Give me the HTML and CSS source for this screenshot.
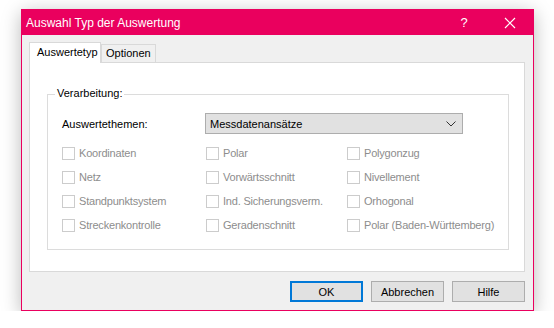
FILE: index.html
```html
<!DOCTYPE html>
<html lang="de">
<head>
    <meta charset="UTF-8">
    <title>Auswahl Typ der Auswertung</title>
    <link rel="stylesheet" href="styles.css">
</head>
<body>
    <div class="window">
        <div class="titlebar">
            <div class="title">Auswahl Typ der Auswertung</div>
            <div class="title-btn help">?</div>
            <div class="title-btn close">
                <svg width="12" height="12" viewBox="0 0 12 12"><path d="M1 1L11 11M11 1L1 11" stroke="#fff" stroke-width="1.2"/></svg>
            </div>
        </div>

        <div class="client">
            <div class="tab-bar">
                <div class="tab active">Auswertetyp</div>
                <div class="tab">Optionen</div>
            </div>

            <div class="tab-panel">
                <div class="group">
                    <span class="group-title">Verarbeitung:</span>

                    <div class="theme-row">
                        <span class="theme-label">Auswertethemen:</span>
                        <div class="select">
                            <span>Messdatenansätze</span>
                            <svg width="10" height="6" viewBox="0 0 10 6"><path d="M0.5 0.5L5 5L9.5 0.5" fill="none" stroke="#333" stroke-width="1"/></svg>
                        </div>
                    </div>

                    <div class="checks">
                        <label class="check"><span class="box"></span>Koordinaten</label>
                        <label class="check"><span class="box"></span>Polar</label>
                        <label class="check"><span class="box"></span>Polygonzug</label>
                        <label class="check"><span class="box"></span>Netz</label>
                        <label class="check"><span class="box"></span>Vorwärtsschnitt</label>
                        <label class="check"><span class="box"></span>Nivellement</label>
                        <label class="check"><span class="box"></span>Standpunktsystem</label>
                        <label class="check"><span class="box"></span>Ind. Sicherungsverm.</label>
                        <label class="check"><span class="box"></span>Orhogonal</label>
                        <label class="check"><span class="box"></span>Streckenkontrolle</label>
                        <label class="check"><span class="box"></span>Geradenschnitt</label>
                        <label class="check"><span class="box"></span>Polar (Baden-Württemberg)</label>
                    </div>
                </div>
            </div>

            <div class="buttons">
                <div class="button default">OK</div>
                <div class="button">Abbrechen</div>
                <div class="button">Hilfe</div>
            </div>
        </div>
    </div>
</body>
</html>
```

FILE: styles.css
```css
* {
    margin: 0;
    padding: 0;
    box-sizing: border-box;
}

body {
    font-family: 'Liberation Sans', Arial, sans-serif;
    font-size: 11px;
    background: #fff;
    color: #000;
    padding: 9px 0 0 21px;
}

.window {
    width: 513px;
    height: 302px;
    border: 1px solid #ea005e;
    box-shadow: 0 4px 18px rgba(0,0,0,0.28);
    display: flex;
    flex-direction: column;
    background: #f0f0f0;
}

.titlebar {
    height: 25px;
    background: #ea005e;
    color: #fff;
    display: flex;
    align-items: center;
    padding-left: 4px;
}

.title {
    flex: 1;
    font-size: 12px;
}

.title-btn {
    width: 46px;
    height: 25px;
    display: flex;
    align-items: center;
    justify-content: center;
}

.help {
    font-size: 13px;
}

.client {
    flex: 1;
    padding: 7px 8px 0 7px;
    display: flex;
    flex-direction: column;
}

.tab-bar {
    display: flex;
    align-items: flex-end;
    height: 20px;
    position: relative;
    z-index: 1;
}

.tab {
    height: 18px;
    padding: 0 4px 0 4px;
    border: 1px solid #d9d9d9;
    border-bottom: none;
    background: #f0f0f0;
    line-height: 17px;
}

.tab.active {
    height: 21px;
    width: 72px;
    padding: 0 0 0 7px;
    background: #fff;
    line-height: 18px;
    margin-bottom: -1px;
}

.tab-panel {
    height: 210px;
    background: #fff;
    border: 1px solid #d9d9d9;
    padding: 31px 15px 0 17px;
}

.group {
    position: relative;
    height: 156px;
    border: 1px solid #dcdcdc;
    padding: 0 14px;
}

.group-title {
    position: absolute;
    top: -8px;
    left: 7px;
    padding: 0 2px;
    background: #fff;
}

.theme-row {
    display: flex;
    align-items: center;
    margin-top: 18px;
    height: 21px;
}

.theme-label {
    width: 143px;
    flex-shrink: 0;
}

.select {
    width: 258px;
    height: 21px;
    background: #e1e1e1;
    border: 1px solid #adadad;
    display: flex;
    align-items: center;
    justify-content: space-between;
    padding: 0 6px 0 4px;
}

.checks {
    display: grid;
    grid-template-columns: 144px 141px 1fr;
    grid-auto-rows: 24px;
    margin-top: 7px;
}

.check {
    display: flex;
    align-items: center;
    color: #8d8d8d;
    white-space: nowrap;
    letter-spacing: -0.2px;
}

.box {
    width: 13px;
    height: 13px;
    border: 1px solid #cccccc;
    background: #fff;
    margin-right: 4px;
    flex-shrink: 0;
}

.buttons {
    display: flex;
    justify-content: flex-end;
    gap: 8px;
    margin-top: 9px;
}

.button {
    width: 73px;
    height: 21px;
    border: 1px solid #adadad;
    background: #e1e1e1;
    display: flex;
    align-items: center;
    justify-content: center;
}

.button.default {
    border: 2px solid #0078d7;
}
```
